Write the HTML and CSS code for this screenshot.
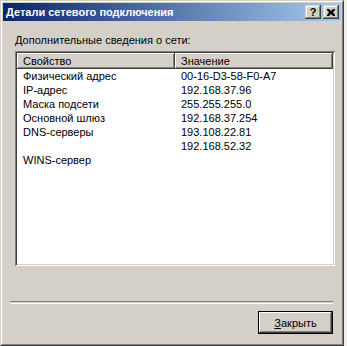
FILE: index.html
```html
<!DOCTYPE html>
<html lang="ru">

<head>
    <meta charset="UTF-8">
    <meta name="viewport" content="width=device-width, initial-scale=1.0">
    <title>Детали сетевого подключения</title>
    <link rel="stylesheet" href="styles.css">
</head>

<body>
    <div class="window">
        <div class="frame">
            <div class="titlebar">
                <span class="title">Детали сетевого подключения</span>
                <div class="caption-buttons">
                    <button class="cap-btn help">?</button>
                    <button class="cap-btn close">
                        <svg width="8" height="7" viewBox="0 0 8 7">
                            <path d="M0 0h2l2 2 2-2h2v1L6 3.5 8 6v1H6L4 5 2 7H0V6l2-2.5L0 1z" fill="#000" />
                        </svg>
                    </button>
                </div>
            </div>

            <div class="content">
                <div class="label">Дополнительные сведения о сети:</div>

                <div class="listview">
                    <div class="lv-header">
                        <div class="lv-col">Свойство</div>
                        <div class="lv-col">Значение</div>
                    </div>
                    <div class="lv-rows">
                        <div class="lv-cell">Физический адрес</div>
                        <div class="lv-cell">00-16-D3-58-F0-A7</div>
                        <div class="lv-cell">IP-адрес</div>
                        <div class="lv-cell">192.168.37.96</div>
                        <div class="lv-cell">Маска подсети</div>
                        <div class="lv-cell">255.255.255.0</div>
                        <div class="lv-cell">Основной шлюз</div>
                        <div class="lv-cell">192.168.37.254</div>
                        <div class="lv-cell">DNS-серверы</div>
                        <div class="lv-cell">193.108.22.81</div>
                        <div class="lv-cell"></div>
                        <div class="lv-cell">192.168.52.32</div>
                        <div class="lv-cell">WINS-сервер</div>
                        <div class="lv-cell"></div>
                    </div>
                </div>

                <div class="separator"></div>

                <div class="actions">
                    <button class="btn default"><u>З</u>акрыть</button>
                </div>
            </div>
        </div>
    </div>
</body>

</html>
```

FILE: styles.css
```css
/* classic 3d dialog */

html,
body {
    margin: 0;
    background: #f0efec;
}

body {
    font-family: "Liberation Sans", Arial, sans-serif;
    font-size: 11px;
    color: #000;
}

.window {
    width: 344px;
    height: 346px;
    box-sizing: border-box;
    border: 1px solid;
    border-color: #d4d0c8 #404040 #404040 #d4d0c8;
    background: #d4d0c8;
}

.frame {
    height: 100%;
    box-sizing: border-box;
    border: 1px solid;
    border-color: #fff #808080 #808080 #fff;
    padding: 1px;
    display: flex;
    flex-direction: column;
}

.titlebar {
    height: 18px;
    display: flex;
    align-items: center;
    justify-content: space-between;
    padding: 0 2px 0 3px;
    background: linear-gradient(90deg, #0a246a 0%, #a6caf0 100%);
}

.title {
    color: #fff;
    font-weight: bold;
    font-size: 11px;
}

.caption-buttons {
    display: flex;
    gap: 2px;
}

.cap-btn {
    width: 16px;
    height: 14px;
    padding: 0;
    border: 0;
    display: flex;
    align-items: center;
    justify-content: center;
    background: #d4d0c8;
    box-shadow: inset -1px -1px #404040, inset 1px 1px #d4d0c8, inset -2px -2px #808080, inset 2px 2px #fff;
    font-family: "Liberation Sans", Arial, sans-serif;
    font-weight: bold;
    font-size: 11px;
    line-height: 14px;
    color: #000;
}

.content {
    padding: 13px 6px 0 12px;
}

.label {
    line-height: 13px;
}

.listview {
    margin-top: 4px;
    height: 215px;
    box-sizing: border-box;
    padding: 2px;
    background: #fff;
    box-shadow: inset 1px 1px #808080, inset -1px -1px #fff, inset 2px 2px #404040, inset -2px -2px #d4d0c8;
}

.lv-header {
    display: grid;
    grid-template-columns: 158px 1fr;
}

.lv-col {
    height: 16px;
    line-height: 16px;
    padding-left: 6px;
    background: #d4d0c8;
    box-shadow: inset -1px -1px #404040, inset 1px 1px #fff, inset -2px -2px #808080;
}

.lv-rows {
    display: grid;
    grid-template-columns: 158px 1fr;
    grid-auto-rows: 14px;
}

.lv-cell {
    line-height: 14px;
    padding-left: 6px;
    white-space: nowrap;
}

.separator {
    margin: 35px 2px 0 -5px;
    height: 1px;
    border-top: 1px solid #808080;
    border-bottom: 1px solid #fff;
}

.actions {
    display: flex;
    justify-content: flex-end;
    margin: 7px 2px 0 0;
}

.btn {
    width: 75px;
    height: 23px;
    padding: 0;
    background: #d4d0c8;
    font-family: "Liberation Sans", Arial, sans-serif;
    font-size: 11px;
    color: #000;
    border: 0;
    box-shadow: inset -1px -1px #404040, inset 1px 1px #fff, inset -2px -2px #808080, inset 2px 2px #d4d0c8;
}

.btn.default {
    border: 1px solid #000;
}
```
